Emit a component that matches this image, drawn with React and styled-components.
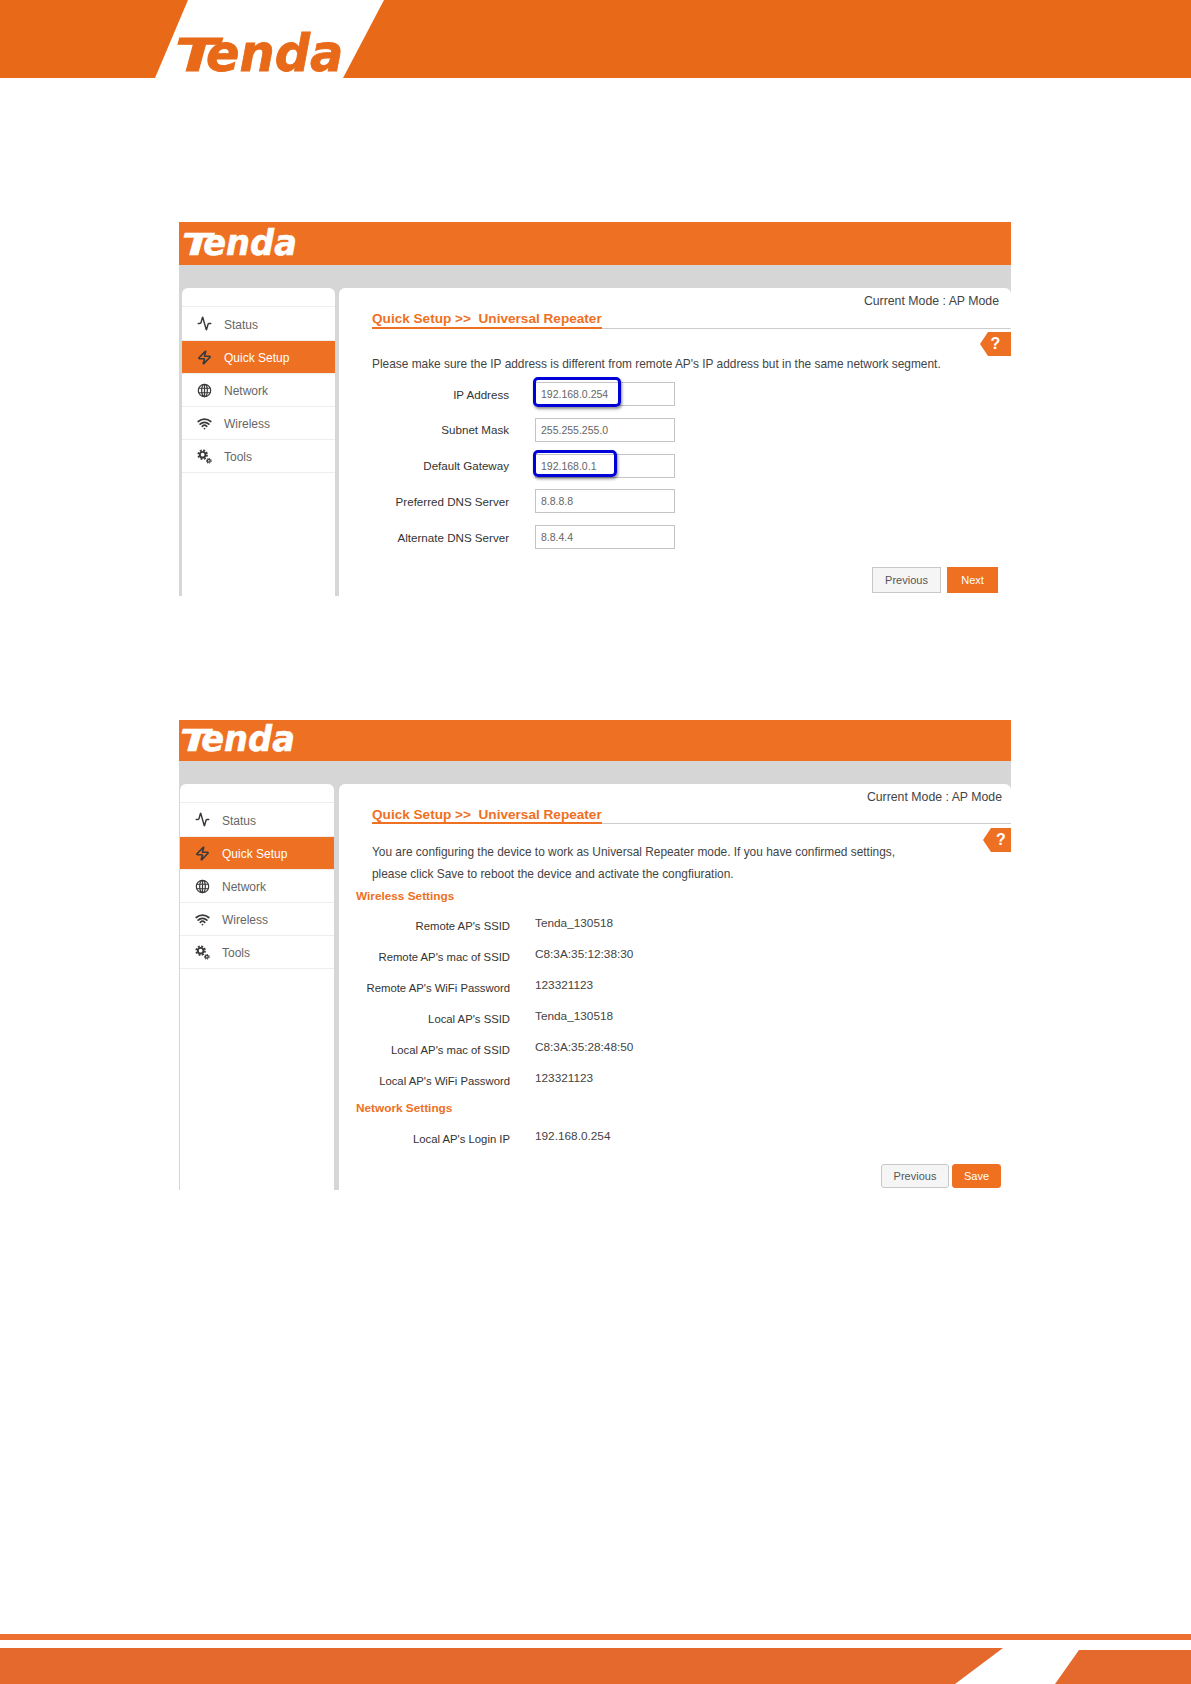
import React from 'react';
import styled, { createGlobalStyle } from 'styled-components';
import { Activity, Zap, Wifi } from 'lucide-react';

const GlobalStyle = createGlobalStyle`
  html, body {
    margin: 0;
    padding: 0;
    background: #fff;
    font-family: "Liberation Sans", Arial, sans-serif;
  }
  * {
    box-sizing: border-box;
  }
`;

const Page = styled.div`
  width: 1191px;
  min-height: 1684px;
  display: flex;
  flex-direction: column;
  overflow: hidden;
`;

const Banner = styled.svg`
  display: block;
  flex: none;
`;

const Shot = styled.section`
  flex: none;
  width: 832px;
  height: ${({ $height }) => $height}px;
  margin: ${({ $top }) => $top}px 0 0 179px;
  display: flex;
  flex-direction: column;
  overflow: hidden;
  background: #d6d6d6;
`;

const ShotHeader = styled.header`
  flex: none;
  height: ${({ $height }) => $height}px;
  background: #ee7023;
  padding: ${({ $top }) => $top}px 0 0 ${({ $left }) => $left}px;
`;

const ShotBody = styled.div`
  flex: 1;
  min-height: 0;
  display: flex;
  gap: ${({ $gap }) => $gap}px;
  padding: 23px 0 0 ${({ $left }) => $left}px;
`;

const Sidebar = styled.nav`
  flex: none;
  width: ${({ $width }) => $width}px;
  background: #fff;
  border-radius: 6px 6px 0 0;
  padding-top: 18px;
`;

const SideRow = styled.div`
  height: 33px;
  display: flex;
  align-items: center;
  gap: 12px;
  padding: 2px 0 0 15px;
  font-size: 12px;
  border-top: 1px solid #eeeeee;
  color: ${({ $active }) => ($active ? '#fff' : '#666')};
  background: ${({ $active }) => ($active ? '#ee7023' : '#fff')};

  &:first-child {
    height: 34px;
  }

  &:last-child {
    height: 34px;
    border-bottom: 1px solid #eeeeee;
  }

  svg {
    flex: none;
    width: 15px;
    height: 15px;
    margin-top: -2px;
    color: #3a3a3a;
  }
`;

const Main = styled.main`
  flex: 1;
  min-width: 0;
  position: relative;
  background: #fff;
  border-radius: 6px 6px 0 0;
  padding-left: 33px;
  color: #444;
  font-size: 12px;
`;

const Mode = styled.div`
  height: ${({ $height }) => $height}px;
  padding: 3px ${({ $right }) => $right}px 0 0;
  font-size: 12.3px;
  line-height: 20px;
  text-align: right;
  color: #444;
`;

const TitleBar = styled.div`
  border-bottom: 1px solid #cccccc;
  height: ${({ $height }) => $height}px;
`;

const Title = styled.h2`
  display: inline-block;
  height: ${({ $height }) => $height}px;
  margin: 0;
  font-size: 13.6px;
  font-weight: 700;
  line-height: 16px;
  white-space: pre;
  color: #ee7023;
  border-bottom: 2px solid #ee7023;
`;

const HelpTag = styled.div`
  position: absolute;
  top: 44px;
  right: 0;
  width: ${({ $width }) => $width}px;
  height: 24px;
  padding-left: ${({ $pad }) => $pad}px;
  background: #ee7023;
  clip-path: polygon(8px 0, 100% 0, 100% 100%, 8px 100%, 0 50%);
  color: #fff;
  font-size: 16px;
  font-weight: 700;
  line-height: 23px;
  text-align: center;
`;

const Para = styled.p`
  margin: ${({ $top }) => $top}px 0 0;
  font-size: 11.9px;
  line-height: ${({ $line }) => $line}px;
  white-space: nowrap;
`;

const FormList = styled.div`
  margin-top: 8px;
  display: flex;
  flex-direction: column;
  gap: 11.75px;
`;

const FormRow = styled.div`
  display: flex;
  align-items: center;
  gap: 26px;
  height: 24px;
`;

const Label = styled.div`
  flex: none;
  display: flex;
  justify-content: flex-end;
  width: ${({ $width }) => $width}px;
  font-size: ${({ $size }) => $size}px;
  color: #333;
  white-space: nowrap;
`;

const Field = styled.div`
  position: relative;
  width: 140px;
  height: 24px;
`;

const TextInput = styled.input`
  display: block;
  width: 100%;
  height: 100%;
  padding: 0 5px;
  border: 1px solid #c4c4c4;
  outline: none;
  background: #fff;
  font: 10.5px "Liberation Sans", Arial, sans-serif;
  color: #666;
`;

const Highlight = styled.div`
  position: absolute;
  left: -2px;
  top: ${({ $top }) => $top}px;
  width: ${({ $width }) => $width}px;
  height: ${({ $height }) => $height}px;
  border: 3px solid #0000d8;
  border-radius: 5px;
  box-shadow: 1px 2px 3px rgba(0, 0, 0, 0.45);
  pointer-events: none;
`;

const Actions = styled.div`
  display: flex;
  justify-content: flex-end;
  gap: ${({ $gap }) => $gap}px;
  margin-top: ${({ $top }) => $top}px;
  padding-right: ${({ $right }) => $right}px;
`;

const Button = styled.button`
  width: ${({ $width }) => $width}px;
  height: ${({ $height }) => $height}px;
  padding: 0;
  border: 1px solid ${({ $primary }) => ($primary ? '#f07022' : '#c8c8c8')};
  border-radius: ${({ $radius }) => $radius}px;
  background: ${({ $primary }) => ($primary ? '#f07022' : '#f5f5f5')};
  color: ${({ $primary }) => ($primary ? '#fff' : '#555')};
  font: 11px "Liberation Sans", Arial, sans-serif;
`;

const SectionHead = styled.h3`
  margin: ${({ $top }) => $top || 0}px 0 0 -16px;
  font-size: 11.8px;
  font-weight: 700;
  line-height: 22px;
  color: #ee7023;
`;

const InfoList = styled.div`
  margin-top: ${({ $top }) => $top}px;
`;

const InfoRow = styled.div`
  display: flex;
  align-items: center;
  gap: 25px;
  height: 31px;
`;

const InfoValue = styled.div`
  padding-bottom: 6px;
  font-size: 11.8px;
  color: #444;
`;

const Footer = styled.footer`
  margin-top: auto;
  flex: none;
`;

const FooterLine = styled.div`
  height: 6px;
  margin-bottom: 8px;
  background: #ee7030;
`;

const LogoSvg = styled.svg`
  display: block;
  overflow: visible;
`;

// the wordmark: a wide T whose bar runs over the "e", then the rest of the word
const LogoWord = ({ x, y, fill }) => (
  <g
    transform={`translate(${x} ${y})`}
    fill={fill}
    stroke={fill}
    strokeWidth="0.8"
    fontFamily="'DejaVu Sans', sans-serif"
    fontWeight="700"
    fontStyle="italic"
  >
    <text transform="scale(1.45 1)" fontSize="44">T</text>
    <text transform="translate(31 0) scale(0.95 1)" fontSize="52">enda</text>
  </g>
);

const GlobeIcon = () => (
  <svg viewBox="0 0 16 16" fill="none" stroke="currentColor" strokeWidth="1.3">
    <circle cx="8" cy="8" r="6.6" />
    <ellipse cx="8" cy="8" rx="3" ry="6.6" />
    <path d="M1.6 5.6h12.8M1.6 10.4h12.8M8 1.4v13.2" />
  </svg>
);

const GearsIcon = () => (
  <svg viewBox="0 0 16 16" fill="none" stroke="currentColor">
    <circle cx="6" cy="6" r="3" strokeWidth="2" />
    <circle cx="6" cy="6" r="4.7" strokeWidth="1.8" strokeDasharray="2.1 1.6" />
    <circle cx="12.6" cy="12.6" r="1.5" strokeWidth="1.3" />
    <circle cx="12.6" cy="12.6" r="2.5" strokeWidth="1.1" strokeDasharray="1.2 0.9" />
  </svg>
);

const PulseIcon = () => <Activity strokeWidth={2.4} />;
const BoltIcon = () => <Zap strokeWidth={2.6} />;
const WifiIcon = () => <Wifi strokeWidth={2.8} />;

const NAV = [
  { label: 'Status', Icon: PulseIcon },
  { label: 'Quick Setup', Icon: BoltIcon, active: true },
  { label: 'Network', Icon: GlobeIcon },
  { label: 'Wireless', Icon: WifiIcon },
  { label: 'Tools', Icon: GearsIcon },
];

const FIELDS = [
  { label: 'IP Address', value: '192.168.0.254', mark: { top: -5, width: 88, height: 30 } },
  { label: 'Subnet Mask', value: '255.255.255.0' },
  { label: 'Default Gateway', value: '192.168.0.1', mark: { top: -4, width: 84, height: 27 } },
  { label: 'Preferred DNS Server', value: '8.8.8.8' },
  { label: 'Alternate DNS Server', value: '8.8.4.4' },
];

const WIRELESS = [
  ["Remote AP's SSID", 'Tenda_130518'],
  ["Remote AP's mac of SSID", 'C8:3A:35:12:38:30'],
  ["Remote AP's WiFi Password", '123321123'],
  ["Local AP's SSID", 'Tenda_130518'],
  ["Local AP's mac of SSID", 'C8:3A:35:28:48:50'],
  ["Local AP's WiFi Password", '123321123'],
];

const RouterHeader = ({ height, left, top }) => (
  <ShotHeader $height={height} $left={left} $top={top}>
    <LogoSvg width="114" height="29" viewBox="0 0 167 42">
      <LogoWord x={0} y={41} fill="#fff" />
    </LogoSvg>
  </ShotHeader>
);

const SideNav = ({ width }) => (
  <Sidebar $width={width}>
    {NAV.map(({ label, Icon, active }) => (
      <SideRow key={label} $active={active}>
        <Icon />
        {label}
      </SideRow>
    ))}
  </Sidebar>
);

const Heading = ({ height }) => (
  <TitleBar $height={height}>
    <Title $height={height}>{'Quick Setup >>  Universal Repeater'}</Title>
  </TitleBar>
);

const App = () => (
  <Page>
    <GlobalStyle />
    <Banner width="1191" height="78" viewBox="0 0 1191 78">
      <polygon points="0,0 188,0 155,78 0,78" fill="#e86a19" />
      <polygon points="384,0 1191,0 1191,78 343,78" fill="#e86a19" />
      <LogoWord x={175} y={71} fill="#e86a19" />
    </Banner>

    <Shot $height={374} $top={144}>
      <RouterHeader height={43} left={3} top={5} />
      <ShotBody $left={3} $gap={4}>
        <SideNav width={153} />
        <Main>
          <Mode $height={23} $right={12}>Current Mode : AP Mode</Mode>
          <Heading height={18} />
          <HelpTag $width={31} $pad={0}>?</HelpTag>
          <Para $top={25} $line={20}>
            Please make sure the IP address is different from remote AP's IP address but in the same network segment.
          </Para>
          <FormList>
            {FIELDS.map(({ label, value, mark }) => (
              <FormRow key={label}>
                <Label $width={137} $size={11.6}>{label}</Label>
                <Field>
                  <TextInput readOnly value={value} />
                  {mark && <Highlight $top={mark.top} $width={mark.width} $height={mark.height} />}
                </Field>
              </FormRow>
            ))}
          </FormList>
          <Actions $gap={6} $top={18} $right={13}>
            <Button $width={69} $height={26} $radius={0}>Previous</Button>
            <Button $width={51} $height={26} $radius={0} $primary>Next</Button>
          </Actions>
        </Main>
      </ShotBody>
    </Shot>

    <Shot $height={470} $top={124}>
      <RouterHeader height={41} left={1} top={3} />
      <ShotBody $left={1} $gap={5}>
        <SideNav width={154} />
        <Main>
          <Mode $height={23} $right={9}>Current Mode : AP Mode</Mode>
          <Heading height={17} />
          <HelpTag $width={28} $pad={8}>?</HelpTag>
          <Para $top={17} $line={22}>
            You are configuring the device to work as Universal Repeater mode. If you have confirmed settings,
            <br />
            please click Save to reboot the device and activate the congfiuration.
          </Para>
          <SectionHead>Wireless Settings</SectionHead>
          <InfoList $top={3}>
            {WIRELESS.map(([label, value]) => (
              <InfoRow key={label}>
                <Label $width={138} $size={11.3}>{label}</Label>
                <InfoValue>{value}</InfoValue>
              </InfoRow>
            ))}
          </InfoList>
          <SectionHead $top={1}>Network Settings</SectionHead>
          <InfoList $top={4.5}>
            <InfoRow>
              <Label $width={138} $size={11.3}>Local AP's Login IP</Label>
              <InfoValue>192.168.0.254</InfoValue>
            </InfoRow>
          </InfoList>
          <Actions $gap={3} $top={9} $right={10}>
            <Button $width={68} $height={24} $radius={3}>Previous</Button>
            <Button $width={49} $height={24} $radius={3} $primary>Save</Button>
          </Actions>
        </Main>
      </ShotBody>
    </Shot>

    <Footer>
      <FooterLine />
      <Banner width="1191" height="36" viewBox="0 0 1191 36">
        <polygon points="0,0 1003,0 955,36 0,36" fill="#e5682c" />
        <polygon points="1079,2 1191,2 1191,36 1055,36" fill="#e5682c" />
      </Banner>
    </Footer>
  </Page>
);

export default App;
